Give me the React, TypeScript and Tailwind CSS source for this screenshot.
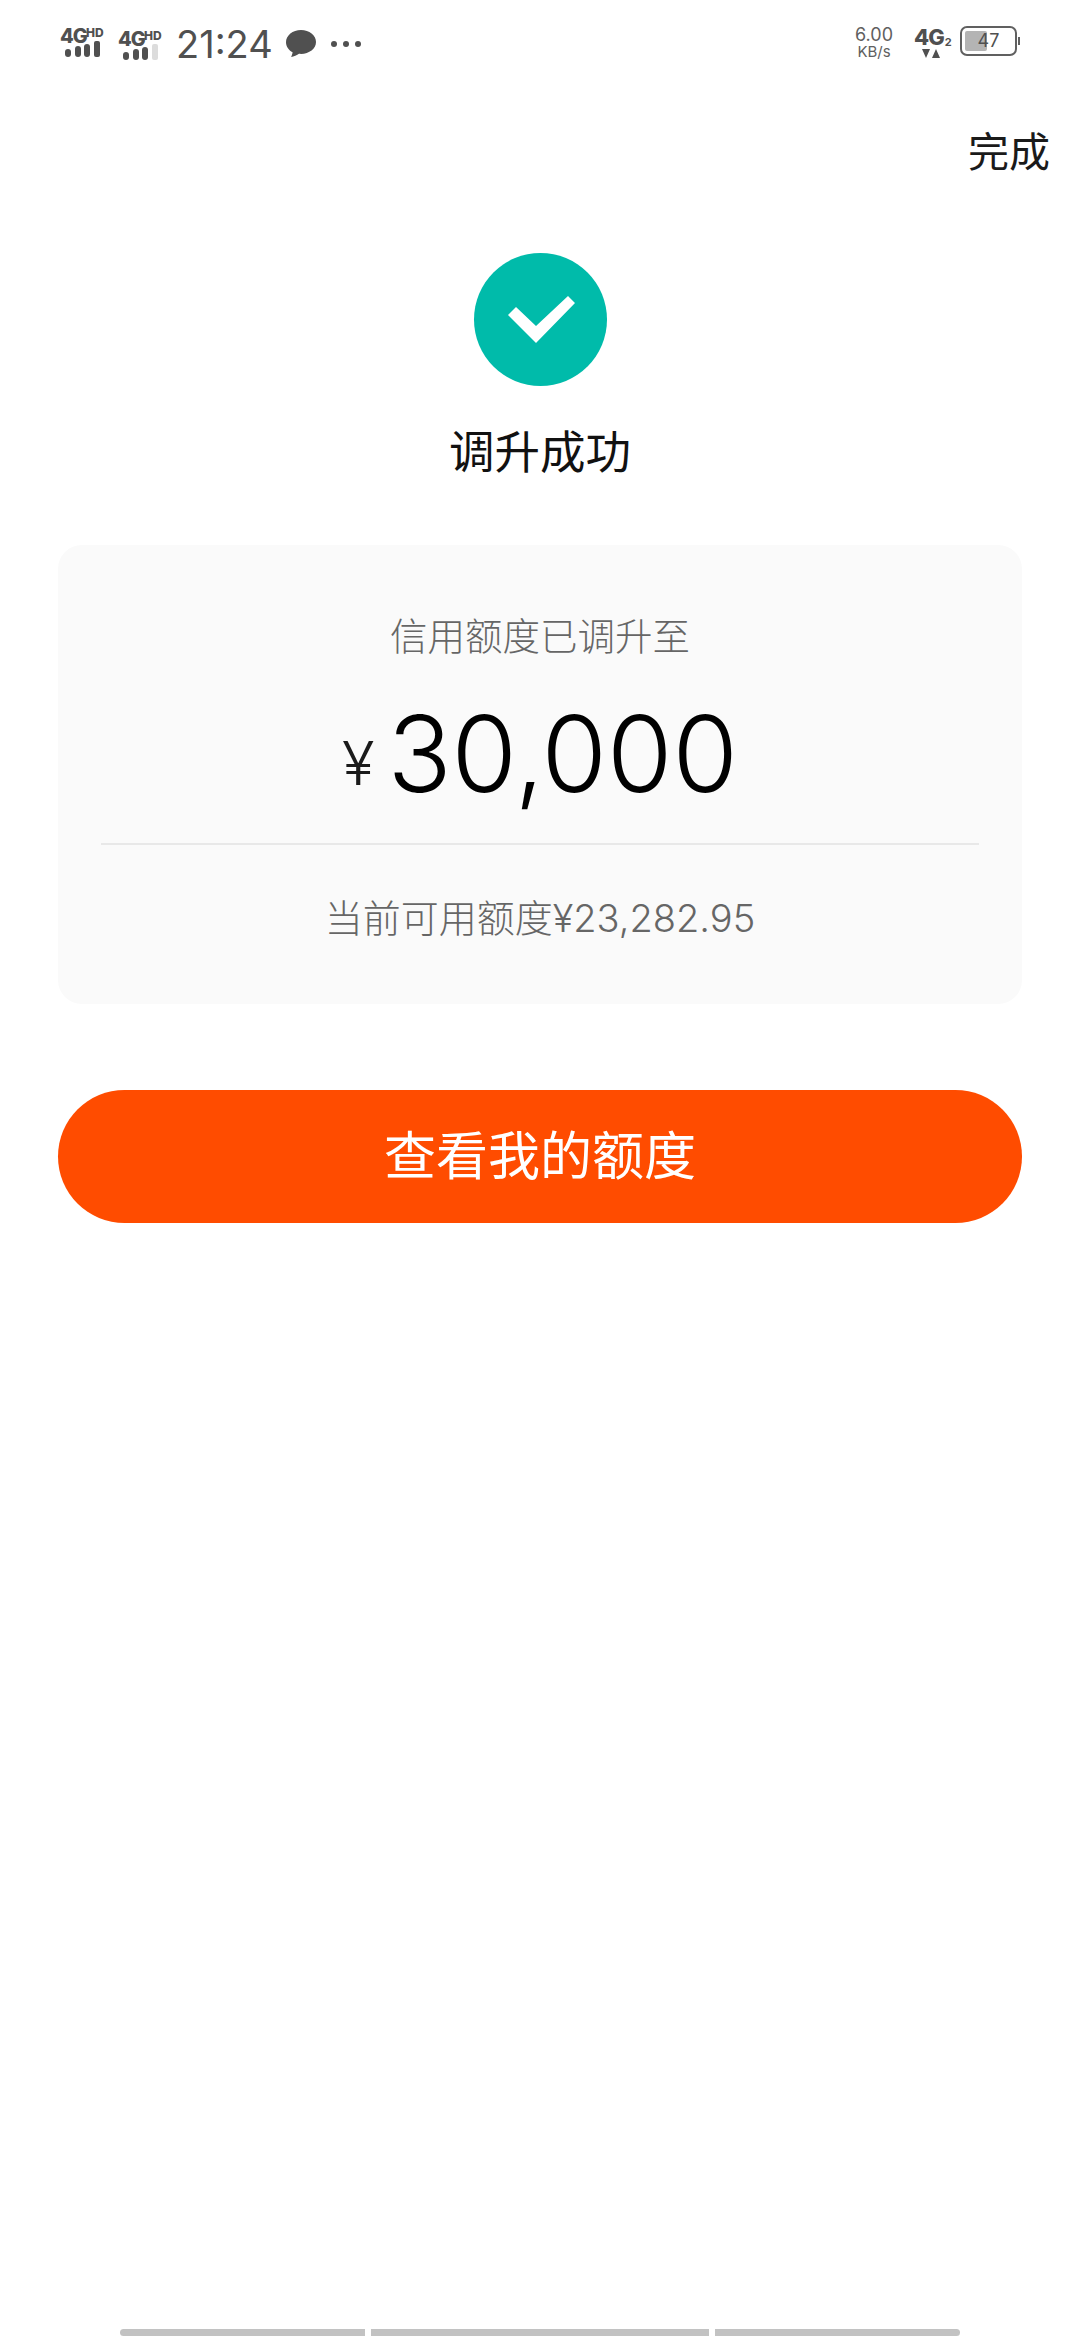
import React from "react";

const fontStack = { fontFamily: 'Inter, "Noto Sans CJK SC", sans-serif' };

const SignalIcon: React.FC<{ dim?: boolean }> = ({ dim }) => (
  <div className="relative mt-[2px] h-[29px] w-[47px] self-start text-[#505050]">
    <span className="absolute left-0 top-[-3px] text-[20px] font-extrabold leading-[22px] tracking-[-1px]">4G</span>
    <span className="absolute left-[26px] top-[-2px] text-[12px] font-extrabold leading-[14px]">HD</span>
    <div className="absolute bottom-0 left-[5px] flex items-end gap-[3.5px]">
      <div className="h-[8px] w-[6px] rounded-[3px] bg-[#505050]" />
      <div className="h-[11px] w-[6px] rounded-[3px] bg-[#505050]" />
      <div className="h-[13px] w-[6px] rounded-[3px] bg-[#505050]" />
      <div className={`h-[16px] w-[6px] rounded-[2px] ${dim ? "bg-[#dcdcdc]" : "bg-[#505050]"}`} />
    </div>
  </div>
);

const StatusBar: React.FC = () => (
  <div className="flex h-[84px] items-start justify-between pl-[60px] pr-[60px] pt-[26px] text-[#505050]">
    <div className="flex items-center">
      <SignalIcon />
      <div className="ml-[11px] flex">
        <SignalIcon dim />
      </div>
      <span className="ml-[11px] text-[38px] leading-[36px]">21:24</span>
      <svg className="ml-[12px]" width="32" height="30" viewBox="0 0 32 30">
        <path
          d="M16 1C7.700 1 1 6.500 1 13.200c0 4.200 2.600 7.900 6.600 10.100-.2 1.700-.9 3.500-1.500 4.700 2.700-.3 6-1.800 7.900-3.200.7.100 1.300.1 2 .1 8.300 0 15-5.300 15-11.900S24.300 1 16 1z"
          fill="#505050"
        />
      </svg>
      <div className="ml-[14px] flex gap-[6px]">
        <div className="h-[6px] w-[6px] rounded-full bg-[#505050]" />
        <div className="h-[6px] w-[6px] rounded-full bg-[#505050]" />
        <div className="h-[6px] w-[6px] rounded-full bg-[#505050]" />
      </div>
    </div>
    <div className="flex items-start">
      <div className="flex flex-col items-center text-[#606060]">
        <span className="text-[18px] leading-[18px]">6.00</span>
        <span className="text-[15px] leading-[15px]">KB/s</span>
      </div>
      <div className="ml-[21px] flex w-[34px] flex-col items-start">
        <div className="flex items-end leading-none">
          <span className="text-[22px] font-extrabold leading-[22px] tracking-[-1px]">4G</span>
          <span className="ml-[1px] text-[11px] font-bold leading-[12px]">2</span>
        </div>
        <svg className="ml-[8px] mt-[1px]" width="18" height="9" viewBox="0 0 18 9">
          <path d="M0 0h8L4 9z M10 9h8L14 0z" fill="#505050" />
        </svg>
      </div>
      <div className="ml-[12px] flex items-center">
        <div className="relative h-[30px] w-[57px] overflow-hidden rounded-[7px] border-[2px] border-[#606060] p-[3px]">
          <div className="h-full w-[22px] rounded-[2px] bg-[#b4b4b4]" />
          <span className="absolute inset-0 flex items-center justify-center text-[18px] leading-none">47</span>
        </div>
        <div className="ml-[1px] h-[8px] w-[2px] bg-[#606060]" />
      </div>
    </div>
  </div>
);

export default function App() {
  return (
    <div className="flex min-h-[2340px] flex-col bg-white" style={fontStack}>
      <StatusBar />
      <div className="flex justify-end pr-[30px] pt-[44px]">
        <span className="text-[41px] leading-[48px] text-[#1a1a1a]">完成</span>
      </div>

      <div className="flex flex-col items-center pt-[77px]">
        <div className="h-[133px] w-[133px] rounded-full bg-[#00bbaa]">
          <svg width="133" height="133" viewBox="0 0 133 133">
            <path d="M42 54 L62 73 L94 43 L101 50 L62 90 L34 62 Z" fill="#fff" />
          </svg>
        </div>
        <h1 className="mt-[39px] text-[45.5px] font-normal leading-[56px] text-[#111]">调升成功</h1>
      </div>

      <div className="mx-[58px] mt-[64px] flex h-[459px] flex-col items-center rounded-[24px] bg-[#fafafa] px-[43px]">
        <p className="mt-[67px] text-[37.5px] font-light leading-[50px] text-[#666]">信用额度已调升至</p>
        <div className="mt-[37px] flex items-baseline text-black">
          <span className="-translate-y-[7px] text-[60px] font-light leading-[110px] text-[#1a1a1a]">¥</span>
          <span className="ml-[13px] text-[106px] font-light leading-[110px]">30,000</span>
        </div>
        <div className="mt-[18px] h-[2px] w-full bg-[#e8e8e8]" />
        <p className="mt-[48px] text-[38px] font-light leading-[50px] text-[#666]">当前可用额度¥23,282.95</p>
      </div>

      <button className="mx-[58px] mt-[86px] h-[133px] rounded-full bg-[#ff4c00] text-[52px] leading-none text-white">
        查看我的额度
      </button>

      <div className="mt-auto flex justify-center gap-[6px] pb-[4px]">
        <div className="h-[7px] w-[245px] rounded-l-full bg-[#c2c2c2]" />
        <div className="h-[7px] w-[338px] bg-[#c2c2c2]" />
        <div className="h-[7px] w-[245px] rounded-r-full bg-[#c2c2c2]" />
      </div>
    </div>
  );
}
